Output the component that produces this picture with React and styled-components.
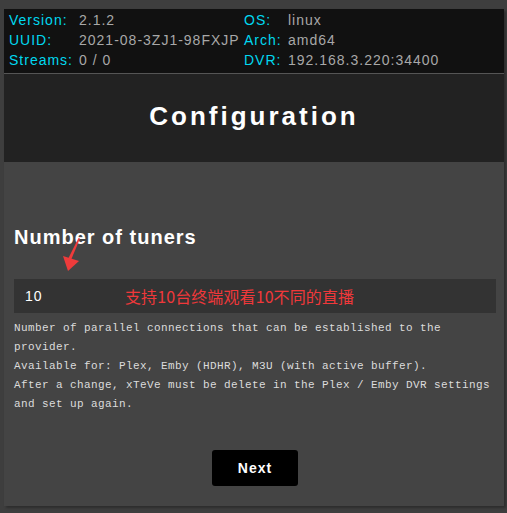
import React from "react";
import styled, { createGlobalStyle } from "styled-components";

const Global = createGlobalStyle`
  html, body { margin: 0; padding: 0; background: #3e3e3e; }
  body { font-family: "Liberation Sans", Arial, sans-serif; }
`;

const Page = styled.div`
  padding: 9px 3px 6px 4px;
  background: #3e3e3e;
  min-height: 513px;
  box-sizing: border-box;
`;

const Panel = styled.div`
  position: relative;
  width: 500px;
  background: #444;
  box-shadow: 2px 2px 2px #2e2e2e;
`;

const Info = styled.div`
  background: #111;
  border-bottom: 1px solid #555;
  padding: 1px 5px 3px;
  display: grid;
  grid-template-columns: 70px 165px 44px 1fr;
  grid-auto-rows: 20px;
  align-items: center;
  font-size: 14px;
  letter-spacing: 1px;
`;

const Label = styled.span`
  color: #00d8f0;
  white-space: nowrap;
`;

const Value = styled.span`
  color: #a8a8a8;
  white-space: nowrap;
`;

const TitleBar = styled.div`
  background: #222;
  height: 88px;
  display: flex;
  align-items: center;
  justify-content: center;
`;

const Title = styled.h1`
  margin: 0;
  color: #fff;
  font-size: 26px;
  font-weight: bold;
  letter-spacing: 3px;
  padding-bottom: 4px;
`;

const Content = styled.div`
  padding: 63px 8px 20px 10px;
  display: flex;
  flex-direction: column;
`;

const Heading = styled.h2`
  margin: 0;
  color: #fff;
  font-size: 20px;
  line-height: 24px;
  font-weight: bold;
  letter-spacing: 1px;
`;

const InputBox = styled.div`
  margin-top: 30px;
  height: 34px;
  background: #333;
  display: flex;
  align-items: center;
  padding-left: 11px;
`;

const InputValue = styled.span`
  width: 100px;
  color: #fff;
  font-size: 14px;
  letter-spacing: 1px;
`;

const Note = styled.span`
  color: #f0383a;
  font-family: "Noto Sans CJK SC", "Liberation Sans", sans-serif;
  font-size: 16px;
  letter-spacing: 0.1px;
`;

const Description = styled.p`
  margin: 6px 0 0;
  color: #dcdcdc;
  font-family: "Liberation Mono", monospace;
  font-size: 11px;
  letter-spacing: 0.4px;
  line-height: 19px;
`;

const Footer = styled.div`
  margin-top: 36px;
  display: flex;
  justify-content: center;
`;

const Button = styled.button`
  width: 86px;
  height: 36px;
  background: #000;
  color: #fff;
  border: none;
  border-radius: 3px;
  font-family: "Liberation Sans", Arial, sans-serif;
  font-size: 14px;
  font-weight: bold;
  letter-spacing: 1px;
  cursor: pointer;
`;

const Arrow = styled.svg`
  position: absolute;
  left: 0;
  top: 0;
  pointer-events: none;
`;

export default function App() {
  return (
    <>
      <Global />
      <Page>
        <Panel>
          <Info>
            <Label>Version:</Label>
            <Value>2.1.2</Value>
            <Label>OS:</Label>
            <Value>linux</Value>
            <Label>UUID:</Label>
            <Value>2021-08-3ZJ1-98FXJP</Value>
            <Label>Arch:</Label>
            <Value>amd64</Value>
            <Label>Streams:</Label>
            <Value>0 / 0</Value>
            <Label>DVR:</Label>
            <Value>192.168.3.220:34400</Value>
          </Info>
          <TitleBar>
            <Title>Configuration</Title>
          </TitleBar>
          <Content>
            <Heading>Number of tuners</Heading>
            <InputBox>
              <InputValue>10</InputValue>
              <Note>支持10台终端观看10不同的直播</Note>
            </InputBox>
            <Description>
              Number of parallel connections that can be established to the provider.
              <br />
              Available for: Plex, Emby (HDHR), M3U (with active buffer).
              <br />
              After a change, xTeVe must be delete in the Plex / Emby DVR settings and set up again.
            </Description>
            <Footer>
              <Button>Next</Button>
            </Footer>
          </Content>
          <Arrow width="100" height="300" viewBox="0 0 100 300">
            <path d="M74.5 229 L76 229.5 L67 251 L64 250 Z" fill="#ee3b3b" />
            <path d="M59 247 L75 252 L64 262 Z" fill="#ee3b3b" />
          </Arrow>
        </Panel>
      </Page>
    </>
  );
}
